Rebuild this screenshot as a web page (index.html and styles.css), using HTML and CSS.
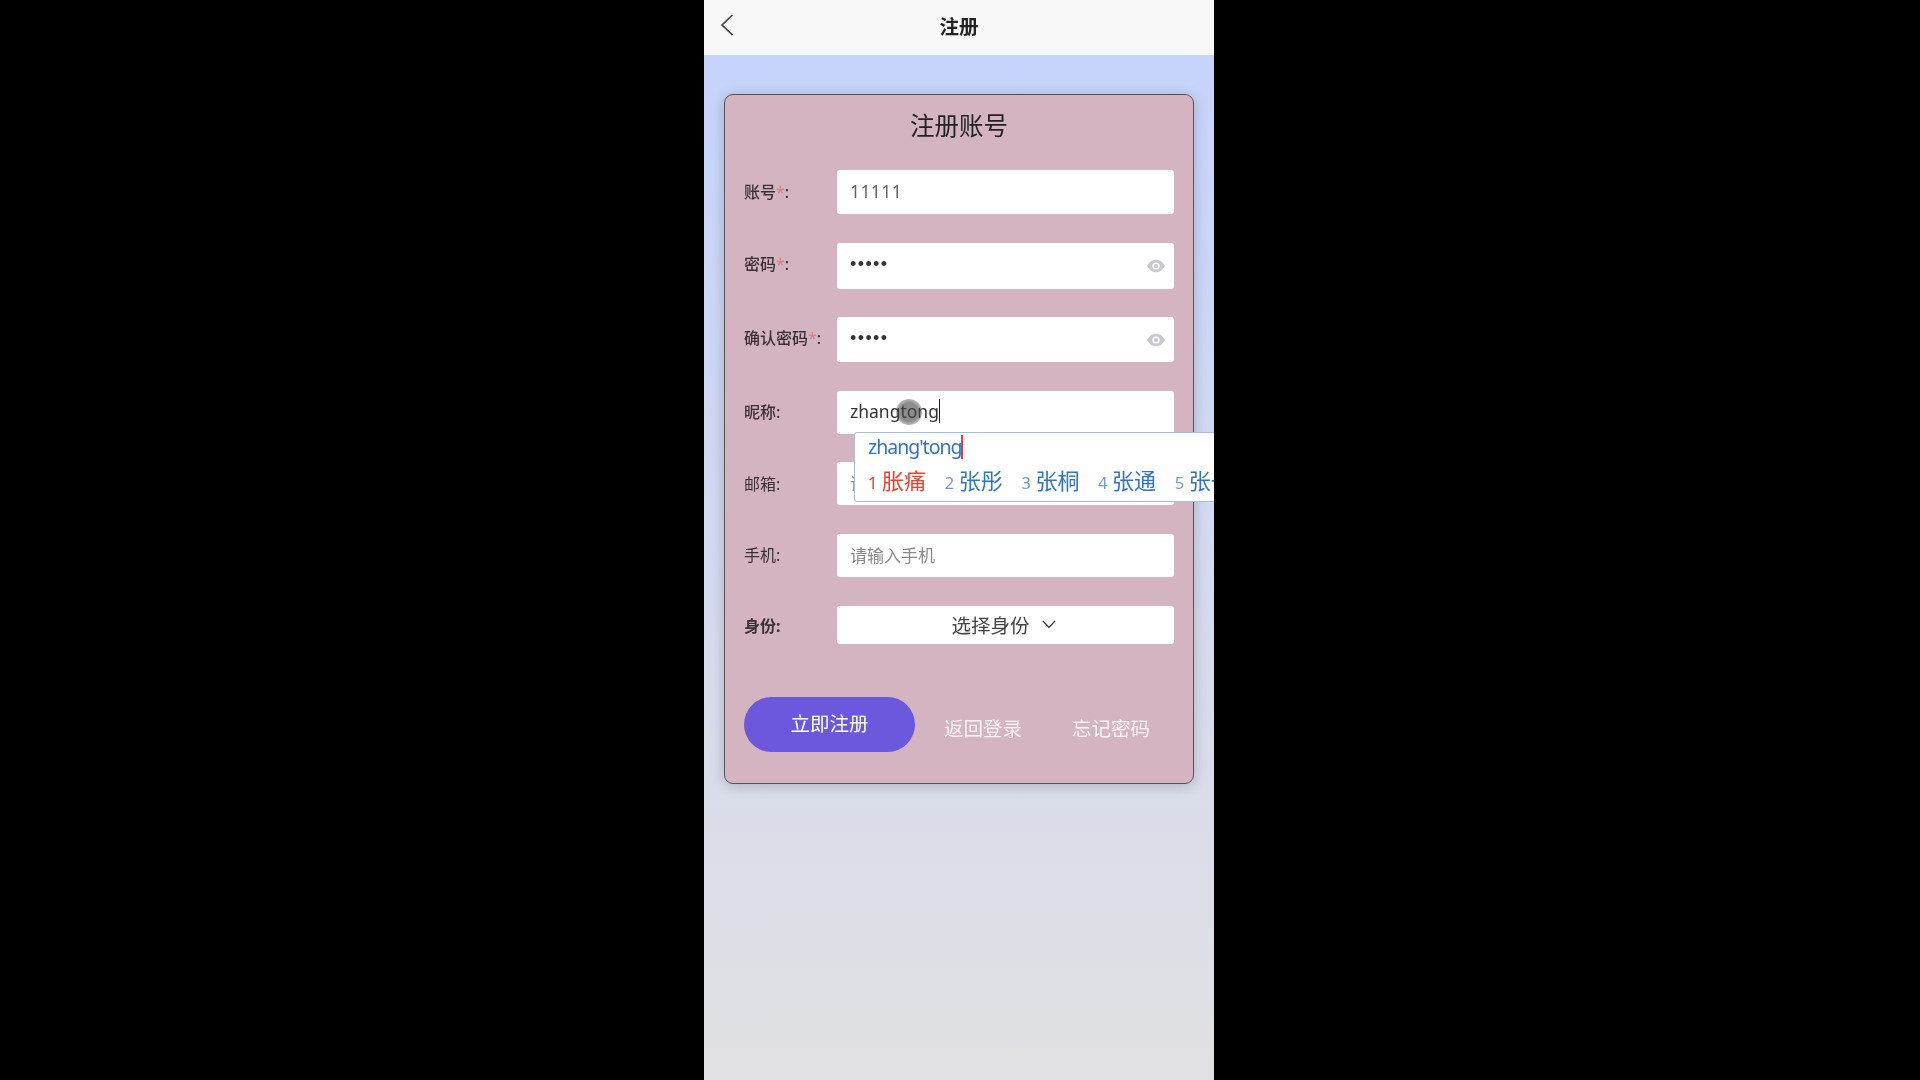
FILE: index.html
```html
<!DOCTYPE html>
<html lang="zh-CN">
<head>
    <meta charset="UTF-8">
    <title>注册</title>
    <link rel="stylesheet" href="styles.css">
</head>
<body>

<div class="phone">
    <header class="topbar">
        <svg class="back" width="14" height="24" viewBox="0 0 14 24"><path d="M12.5 2 L2 12 L12.5 22" fill="none" stroke="#444" stroke-width="1.7"/></svg>
        <span class="topbar-title">注册</span>
    </header>

    <main class="content">
        <section class="card">
            <h1 class="card-title">注册账号</h1>

            <div class="rows">
                <div class="row row-account">
                    <label>账号<em>*</em>:</label>
                    <div class="field muted">11111</div>
                </div>
                <div class="row row-pass">
                    <label>密码<em>*</em>:</label>
                    <div class="field dots">•••••
                        <svg class="eye" width="20" height="14" viewBox="0 0 20 14"><path d="M1 7 C4 2 7 .8 10 .8 S16 2 19 7 C16 12 13 13.2 10 13.2 S4 12 1 7Z" fill="#c9c9cd"/><circle cx="10" cy="7" r="3.6" fill="#fff"/><circle cx="10" cy="7" r="2.2" fill="#c9c9cd"/></svg>
                    </div>
                </div>
                <div class="row row-confirm">
                    <label>确认密码<em>*</em>:</label>
                    <div class="field dots">•••••
                        <svg class="eye" width="20" height="14" viewBox="0 0 20 14"><path d="M1 7 C4 2 7 .8 10 .8 S16 2 19 7 C16 12 13 13.2 10 13.2 S4 12 1 7Z" fill="#c9c9cd"/><circle cx="10" cy="7" r="3.6" fill="#fff"/><circle cx="10" cy="7" r="2.2" fill="#c9c9cd"/></svg>
                    </div>
                </div>
                <div class="row row-nick">
                    <label>昵称:</label>
                    <div class="field"><span class="typed">zhangtong</span><i class="touch"></i></div>
                </div>
                <div class="row row-mail">
                    <label class="light">邮箱:</label>
                    <div class="field placeholder">请输入邮箱</div>
                </div>
                <div class="row row-phone">
                    <label class="light">手机:</label>
                    <div class="field placeholder">请输入手机</div>
                </div>
                <div class="row row-role">
                    <label class="strong">身份:</label>
                    <div class="field select">选择身份
                        <svg width="14" height="9" viewBox="0 0 14 9"><path d="M1 1 L7 7.5 L13 1" fill="none" stroke="#444" stroke-width="1.3"/></svg>
                    </div>
                </div>
            </div>

            <div class="actions">
                <button class="submit">立即注册</button>
                <a class="link">返回登录</a>
                <a class="link">忘记密码</a>
            </div>
        </section>
    </main>

    <div class="ime">
        <div class="ime-input"><span>zhang'tong</span></div>
        <div class="ime-list">
            <div class="cand active"><b>1</b>胀痛</div>
            <div class="cand"><b>2</b>张彤</div>
            <div class="cand"><b>3</b>张桐</div>
            <div class="cand"><b>4</b>张通</div>
            <div class="cand"><b>5</b>张一</div>
        </div>
    </div>
</div>

</body>
</html>
```

FILE: styles.css
```css
* {
    box-sizing: border-box;
}
html, body {
    height: 100%;
}
body {
    margin: 0;
    background: #000;
    display: flex;
    justify-content: center;
    padding-right: 2px;
    overflow: hidden;
    font-family: "Noto Sans", "Noto Sans CJK SC", sans-serif;
}
.phone {
    position: relative;
    width: 510px;
    height: 1080px;
    overflow: hidden;
    display: flex;
    flex-direction: column;
    filter: blur(0.4px);
}
.topbar {
    position: relative;
    height: 55px;
    background: #f8f8f8;
    display: flex;
    align-items: center;
    justify-content: center;
    flex: none;
    padding-bottom: 5px;
}
.back {
    position: absolute;
    left: 16px;
    top: 13px;
}
.topbar-title {
    font-size: 19.5px;
    font-weight: 700;
    color: #222;
}
.content {
    flex: 1;
    padding: 39px 20px 0 20px;
    background: linear-gradient(#c6d3fc, #e1e1e3);
}
.card {
    height: 690px;
    background: #d5b4c2;
    border: 1px solid #555;
    border-radius: 9px;
    box-shadow: 0 2px 14px rgba(0, 0, 0, 0.2);
    padding: 0 19px;
}
.card-title {
    margin: 0;
    height: 75px;
    line-height: 62px;
    text-align: center;
    font-size: 24.5px;
    font-weight: 400;
    color: #222;
}
.rows {
    display: flex;
    flex-direction: column;
    gap: 28.5px;
}
.row {
    display: flex;
    align-items: center;
}
.row-account { height: 44px; }
.row-pass { height: 46px; }
.row-confirm { height: 45px; }
.row-nick { height: 43px; }
.row-mail { height: 43px; }
.row-phone { height: 43.5px; }
.row-role { height: 38px; }
.row label {
    width: 93px;
    flex: none;
    font-size: 16px;
    font-weight: 500;
    color: #3a3036;
    padding-bottom: 2px;
}
.row-pass label, .row-confirm label {
    padding-bottom: 5px;
}
.row label.light {
    font-weight: 400;
}
.row label.strong {
    font-weight: 700;
    padding-bottom: 0;
}
.row label em {
    font-style: normal;
    color: #e57b8b;
}
.field {
    position: relative;
    flex: 1;
    height: 100%;
    background: #fff;
    border-radius: 3px;
    display: flex;
    align-items: center;
    padding: 0 13px;
    font-size: 17.5px;
    color: #333;
    padding-bottom: 2px;
}
.muted {
    color: #666;
    letter-spacing: 0.4px;
}
.placeholder {
    font-size: 17px;
    color: #8a8a8a;
}
.dots {
    font-family: "Liberation Sans", sans-serif;
    font-size: 18px;
    letter-spacing: 1.4px;
    color: #333;
}
.eye {
    position: absolute;
    right: 8px;
    top: 50%;
    margin-top: -7px;
}
.typed {
    border-right: 1px solid #222;
    line-height: 24px;
}
.touch {
    position: absolute;
    left: 59px;
    top: 8px;
    width: 26px;
    height: 26px;
    border-radius: 50%;
    background: radial-gradient(rgba(70, 70, 70, 0.62) 50%, rgba(70, 70, 70, 0));
}
.select {
    justify-content: center;
    gap: 12px;
    font-size: 19.5px;
    color: #444;
    padding: 0 17px 0 13px;
}
.actions {
    display: flex;
    align-items: center;
    margin-top: 53px;
}
.submit {
    flex: none;
    width: 171px;
    height: 55px;
    border: none;
    border-radius: 28px;
    background: #6b58dc;
    color: #fff;
    font-family: inherit;
    font-size: 19.5px;
    margin-right: 29px;
    padding: 0 0 4px;
}
.link {
    flex: none;
    white-space: nowrap;
    font-size: 19.5px;
    color: #fdf4f7;
    margin-top: 6px;
}
.link + .link {
    margin-left: 50px;
}
.ime {
    position: absolute;
    left: 150px;
    top: 432px;
    width: 380px;
    height: 70px;
    background: #fff;
    border: 1px solid #a9bcd8;
    border-radius: 3px;
    padding: 0 0 0 13px;
}
.ime-input {
    height: 28px;
    display: flex;
    align-items: center;
    font-size: 19.5px;
    color: #2f74c8;
}
.ime-input span {
    border-right: 2px solid #d9433a;
    line-height: 24px;
    letter-spacing: -1px;
}
.ime-list {
    display: flex;
    margin-top: 4px;
    white-space: nowrap;
}
.cand {
    width: 76.7px;
    flex: none;
    font-size: 22px;
    line-height: 30px;
    color: #2f74c8;
}
.cand b {
    display: inline-block;
    width: 14px;
    font-size: 16.5px;
    font-weight: 400;
    color: #6f9bd2;
}
.cand.active, .cand.active b {
    color: #e8432d;
}
```
